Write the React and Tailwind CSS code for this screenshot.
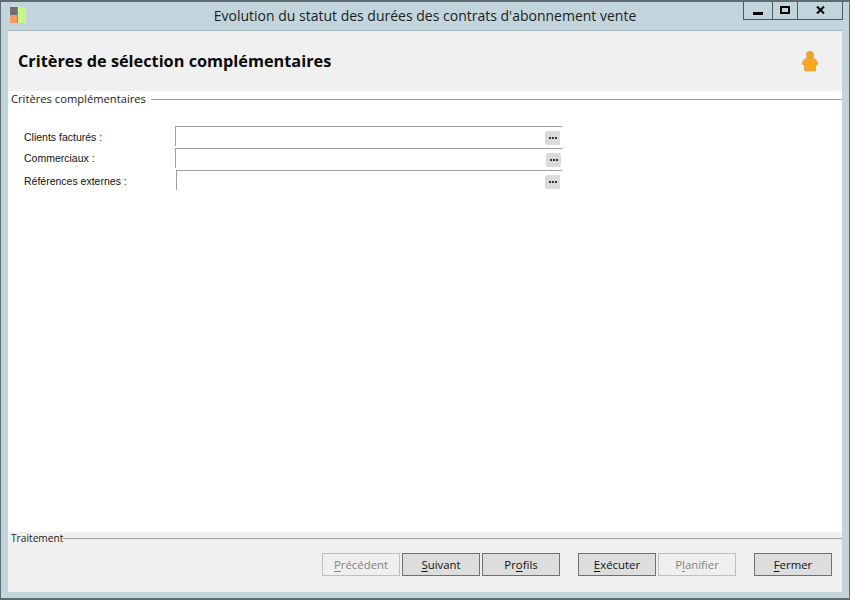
import React from "react";

const fields = [
  { label: "Clients facturés :", inputClass: "ml-[167px] w-[387px]", labelClass: "top-[4px]" },
  { label: "Commerciaux :", inputClass: "ml-[167px] w-[388px]", labelClass: "top-[3px]" },
  { label: "Références externes :", inputClass: "ml-[168px] w-[386px]", labelClass: "top-[4px]" },
];

// Underlines the access key of a button, like the Windows dialog does
function Action({ before = "", letter, after, disabled, className = "" }) {
  return (
    <button
      className={`h-[23px] w-[78px] border text-[11.4px] leading-none ${
        disabled ? "border-[#bfbfbf] bg-[#efefef] text-[#838383]" : "border-[#707070] bg-[#dddddd] text-[#111111]"
      } ${className}`}
    >
      {before}
      <span className="underline underline-offset-2">{letter}</span>
      {after}
    </button>
  );
}

function Person() {
  return (
    <svg width="18" height="22" viewBox="0 0 18 22">
      <path
        d="M5 8.5 C6.5 7.5 11.5 7.5 13 8.5 C15.5 9.5 16.5 11.5 16.5 14 C16.5 15 15.5 15.5 14.5 15 L14.5 20 C14.5 21 13.5 21 13 21 L5 21 C4.5 21 3.5 21 3.5 20 L3.5 15 C2.5 15.5 1.5 15 1.5 14 C1.5 11.5 2.5 9.5 5 8.5 Z"
        fill="#fba61f"
        stroke="#d9a05a"
        strokeWidth="0.8"
      />
      <circle cx="9" cy="5" r="3.8" fill="#eea22a" stroke="#d9a05a" strokeWidth="0.6" />
    </svg>
  );
}

export default function App() {
  return (
    <div className="w-[850px] h-[600px] flex flex-col bg-[#c2d5dc] border border-t-2 border-[#5e6b72] border-b-2 font-['Open_Sans',sans-serif] overflow-hidden">
      {/* Title bar */}
      <div className="h-[28px] shrink-0 grid grid-cols-[1fr_auto_1fr] text-[#1c1c1c]">
        <div className="pl-[9px] pt-[5px]">
          <div className="flex w-[16px] h-[16px]">
            <div className="w-[8px] flex flex-col border-r border-[#8a8a8a]">
              <div className="h-[8px] bg-[#6e6e6e]" />
              <div className="h-[8px] bg-[#fb9a68]" />
            </div>
            <div className="w-[8px] bg-[#c8f58c]" />
          </div>
        </div>
        <div className="text-[14px] leading-[28px]">
          Evolution du statut des durées des contrats d'abonnement vente
        </div>
        <div className="flex justify-end pr-[6px]">
          <div className="flex h-[19px] -mt-[2px] border border-t-0 border-[#4f5a60] text-black box-content">
            <div className="w-[28px] flex items-end justify-center pb-[4px]">
              <div className="w-[10px] h-[3px] bg-black" />
            </div>
            <div className="w-[26px] border-x border-[#4f5a60] flex items-center justify-center">
              <div className="w-[10px] h-[8px] border-2 border-black" />
            </div>
            <div className="w-[44px] flex items-center justify-center">
              <svg width="9" height="8" viewBox="0 0 9 8">
                <path d="M1 0.5 L8 7.5 M8 0.5 L1 7.5" stroke="#000" strokeWidth="2" />
              </svg>
            </div>
          </div>
        </div>
      </div>

      {/* Dialog body */}
      <div className="flex-1 mx-[7px] mb-[6px] flex flex-col border-t border-[#a9b8be]">
        <div className="h-[60px] shrink-0 bg-[#f0f0f0] flex items-center justify-between pl-[10px] pr-[23px]">
          <h1 className="font-bold text-[16.3px] text-[#0a0a0a]">
            Critères de sélection complémentaires
          </h1>
          <Person />
        </div>

        <div className="flex-1 bg-white">
          <div className="flex items-center h-[16px] pl-[3px]">
            <span className="text-[11.2px] text-[#1a1a1a]">Critères complémentaires</span>
            <div className="flex-1 ml-[5px] h-px bg-[#a0a0a0]" />
          </div>
          <div className="pt-[20px] flex flex-col gap-[6px]">
            {fields.map((f) => (
              <div key={f.label} className="relative flex h-[16px]">
                <span className={`absolute left-[16px] ${f.labelClass} font-['Liberation_Sans',sans-serif] text-[10.5px] leading-[13px] text-[#111111]`}>
                  {f.label}
                </span>
                <div className={`${f.inputClass} h-[20px] -mb-[4px] -mt-[1px] border-l border-t border-[#a0a0a0] flex justify-end pt-[4px] pr-[2px]`}>
                  <div className="w-[15px] h-[14px] rounded-[2px] border border-[#dcdcdc] bg-[#dadada] flex items-center justify-center gap-px">
                    <i className="w-[2px] h-[2px] bg-[#333333]" />
                    <i className="w-[2px] h-[2px] bg-[#333333]" />
                    <i className="w-[2px] h-[2px] bg-[#333333]" />
                  </div>
                </div>
              </div>
            ))}
          </div>
        </div>

        {/* Footer */}
        <div className="h-[60px] shrink-0 bg-[#f0f0f0]">
          <div className="flex items-center h-[13px]">
            <span className="pl-[3px] text-[10.2px] text-[#1a1a1a]">Traitement</span>
            <div className="flex-1 h-px bg-[#a0a0a0]" />
          </div>
          <div className="flex justify-end pt-[8px] pr-[10px]">
            <Action letter="P" after="récédent" disabled />
            <Action letter="S" after="uivant" className="ml-[2px]" />
            <Action before="Pr" letter="o" after="fils" className="ml-[2px]" />
            <Action letter="E" after="xécuter" className="ml-[18px]" />
            <Action before="P" letter="l" after="anifier" disabled className="ml-[2px]" />
            <Action letter="F" after="ermer" className="ml-[18px]" />
          </div>
        </div>
      </div>
    </div>
  );
}
